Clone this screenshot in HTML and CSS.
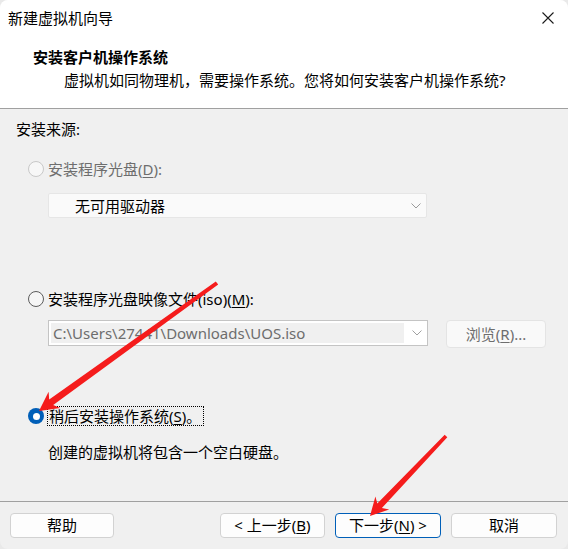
FILE: index.html
```html
<!DOCTYPE html>
<html lang="zh-CN">
<head>
<meta charset="utf-8">
<title>新建虚拟机向导</title>
<link rel="stylesheet" href="styles.css">
</head>
<body>
<div class="window">
  <div class="top">
    <div class="titlebar">
      <span class="title">新建虚拟机向导</span>
      <svg class="close" width="12" height="12" viewBox="0 0 12 12"><path d="M0.5 0.5 L11.5 11.5 M11.5 0.5 L0.5 11.5" stroke="#1b1b1b" stroke-width="1.1" fill="none"/></svg>
    </div>
    <div class="header">
      <div class="h-title">安装客户机操作系统</div>
      <div class="h-sub">虚拟机如同物理机，需要操作系统。您将如何安装客户机操作系统?</div>
    </div>
  </div>

  <div class="body">
    <div class="src">安装来源:</div>
    <div class="opt opt1 disabled">
      <span class="radio radio-off"></span>
      <span class="label">安装程序光盘(<u>D</u>):</span>
    </div>
    <div class="drop1">
      <span>无可用驱动器</span>
      <svg class="chev" width="10" height="6" viewBox="0 0 10 6"><path d="M0.5 0.5 L5 5 L9.5 0.5" stroke="#9a9a9a" stroke-width="1" fill="none"/></svg>
    </div>
    <div class="opt opt2">
      <span class="radio radio-on-normal"></span>
      <span class="label">安装程序光盘映像文件(iso)(<u>M</u>):</span>
    </div>
    <div class="row2">
      <div class="combo">
        <div class="field">C:\Users\27441\Downloads\UOS.iso</div>
        <svg class="chev2" width="10" height="6" viewBox="0 0 10 6"><path d="M0.5 0.5 L5 5 L9.5 0.5" stroke="#a0a0a0" stroke-width="1" fill="none"/></svg>
      </div>
      <div class="browse">浏览(<u>R</u>)...</div>
    </div>
    <div class="opt opt3">
      <span class="radio radio-checked"></span>
      <span class="label focus">稍后安装操作系统(<u>S</u>)。</span>
    </div>
    <div class="desc">创建的虚拟机将包含一个空白硬盘。</div>
  </div>

  <div class="footer">
    <div class="btn btn-help">帮助</div>
    <div class="btn-group">
      <div class="btn">&lt; 上一步(<u>B</u>)</div>
      <div class="btn btn-default">下一步(<u>N</u>) &gt;</div>
      <div class="btn">取消</div>
    </div>
  </div>

  <svg class="arrows" width="568" height="549" viewBox="0 0 568 549">
    <polygon fill="#f51c1c" points="218.2,284.6 53.2,405 60.2,408 39,411 48.6,391.8 49.2,399.4 215.8,281.4"/>
    <polygon fill="#f51c1c" points="447.3,437.2 381.9,508 389.2,509.4 370,516 375.4,496.4 377.3,503.6 444.7,434.8"/>
  </svg>
</div>
</body>
</html>
```

FILE: styles.css
```css
* { box-sizing: border-box; }
html, body { margin: 0; padding: 0; }
body {
  background: #e9e9e9;
  font-family: "Noto Sans", "Noto Sans CJK SC", sans-serif;
  font-size: 15px;
  color: #000;
}
.window {
  position: relative;
  width: 568px;
  height: 549px;
  background: #f0f0f0;
  border-radius: 8px;
  overflow: hidden;
}
.top {
  background: #fff;
  border-bottom: 1px solid #a0a0a0;
  height: 109px;
}
.titlebar {
  height: 36px;
  display: flex;
  align-items: center;
  justify-content: space-between;
  padding: 0 14px 0 8px;
}
.title { line-height: 20px; }
.close { display: block; margin-top: -1px; }
.header { padding: 11px 0 0 33px; }
.h-title { font-weight: 700; line-height: 20px; }
.h-sub { margin-top: 3px; padding-left: 31px; line-height: 20px; }

.body {
  height: 392px;
  padding: 10px 0 0 16px;
  display: flex;
  flex-direction: column;
  align-items: flex-start;
}
.src { line-height: 20px; }
.opt {
  display: flex;
  align-items: center;
  margin-left: 12px;
  height: 20px;
}
.opt .label { margin-left: 4px; line-height: 20px; }
.opt1 { margin-top: 20px; }
.disabled .label { color: #6e6e6e; }
.radio {
  width: 16px;
  height: 16px;
  border-radius: 50%;
  flex: none;
}
.radio-off { border: 1px solid #c8c8c8; background: #f7f7f7; }
.radio-on-normal { border: 1px solid #5c5c5c; background: #f6f6f6; }
.radio-checked {
  background: #005fb8;
  display: flex;
  align-items: center;
  justify-content: center;
}
.radio-checked::after {
  content: "";
  width: 7px;
  height: 7px;
  border-radius: 50%;
  background: #fff;
}
.drop1 {
  margin: 14px 0 0 32px;
  width: 379px;
  height: 25px;
  background: #fafafa;
  border: 1px solid #e6e6e6;
  border-radius: 2px;
  display: flex;
  align-items: center;
  justify-content: space-between;
  padding: 0 5px 0 26px;
  line-height: 20px;
}
.chev { display: block; margin-top: 1px; }
.opt2 { margin-top: 71px; }
.row2 {
  margin: 11px 0 0 32px;
  display: flex;
  align-items: flex-start;
}
.combo {
  width: 380px;
  height: 26px;
  background: #fff;
  border: 1px solid #c4c4c4;
  padding: 2px;
  display: flex;
  align-items: center;
}
.field {
  width: 353px;
  height: 20px;
  background: #f0f0f0;
  color: #6d6d6d;
  line-height: 20px;
  padding-left: 2px;
  white-space: nowrap;
  overflow: hidden;
}
.chev2 { display: block; margin-left: 8px; }
.browse {
  margin-left: 18px;
  width: 100px;
  height: 28px;
  background: #f9f9f9;
  border: 1px solid #e4e4e4;
  border-radius: 4px;
  color: #6e6e6e;
  text-align: center;
  line-height: 26px;
}
.opt3 { margin-top: 58px; }
.opt3 .label.focus {
  margin-left: 3px;
  border: 1px dotted #000;
  line-height: 18px;
  padding: 0 2px 0 1px;
}
.desc { margin: 16px 0 0 32px; line-height: 20px; }

.footer {
  border-top: 1px solid #a0a0a0;
  padding: 11px 11px 0 10px;
  display: flex;
  justify-content: space-between;
  align-items: flex-start;
}
.btn-group { display: flex; gap: 10px; }
.btn {
  width: 105px;
  height: 25px;
  background: #fdfdfd;
  border: 1px solid #d2d2d2;
  border-radius: 4px;
  text-align: center;
  line-height: 23px;
  white-space: nowrap;
}
.btn-help { width: 104px; }
.btn-default { width: 106px; border-color: #005fb8; }
.btn-group .btn:last-child { width: 106px; }
u { text-underline-offset: 2px; text-decoration-thickness: 1px; }

.arrows {
  position: absolute;
  left: 0;
  top: 0;
  pointer-events: none;
}
```
